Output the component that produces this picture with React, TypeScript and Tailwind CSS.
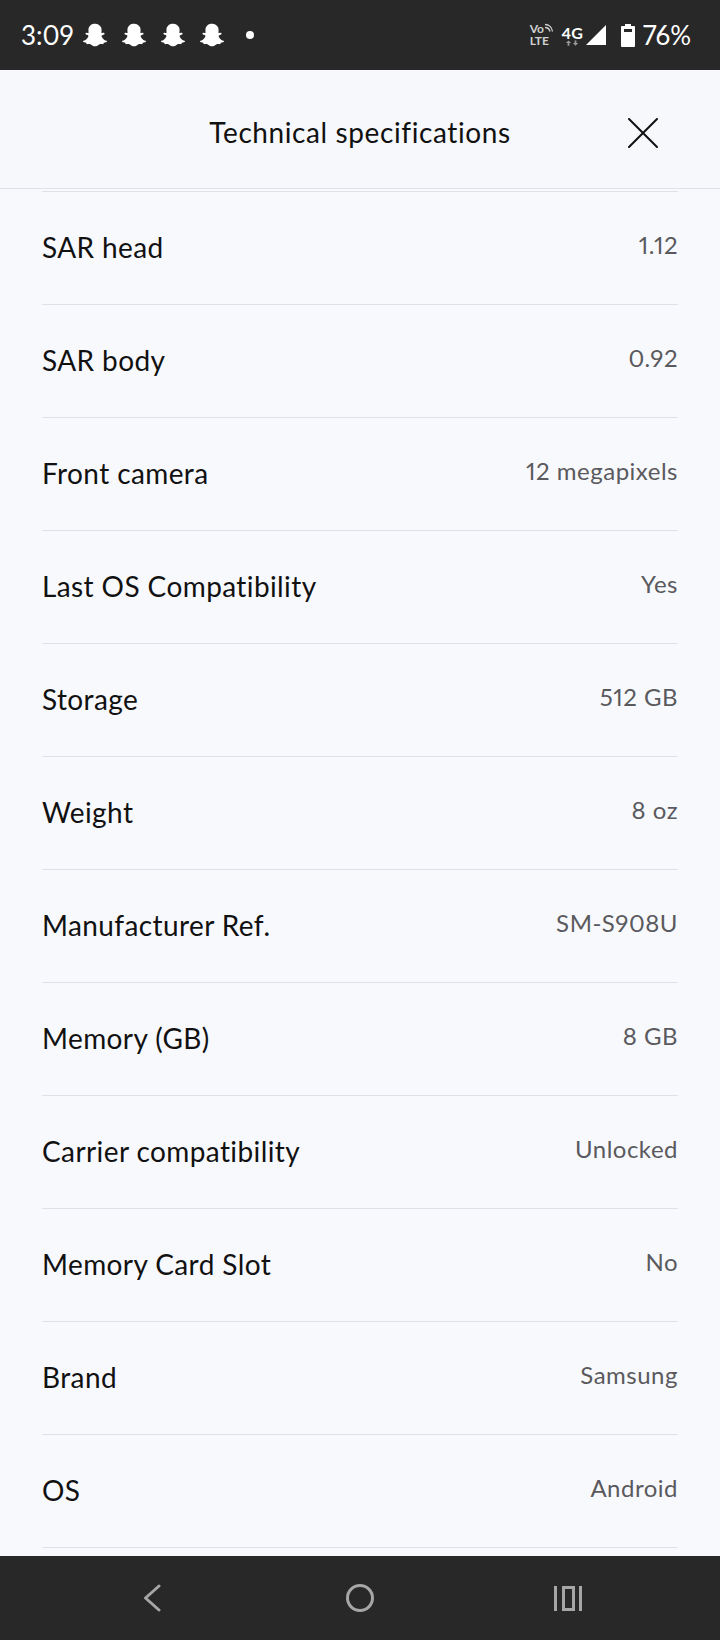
import { FaSnapchatGhost } from "react-icons/fa";

const SPECS = [
  { label: "SAR head", value: "1.12" },
  { label: "SAR body", value: "0.92" },
  { label: "Front camera", value: "12 megapixels" },
  { label: "Last OS Compatibility", value: "Yes" },
  { label: "Storage", value: "512 GB" },
  { label: "Weight", value: "8 oz" },
  { label: "Manufacturer Ref.", value: "SM-S908U" },
  { label: "Memory (GB)", value: "8 GB" },
  { label: "Carrier compatibility", value: "Unlocked" },
  { label: "Memory Card Slot", value: "No" },
  { label: "Brand", value: "Samsung" },
  { label: "OS", value: "Android" },
];

function StatusBar() {
  return (
    <div className="h-[70px] shrink-0 bg-[#282828] text-white flex items-center justify-between pl-[21px] pr-[29px]">
      <div className="flex items-center">
        <span className="text-[26px] mr-[9px]">3:09</span>
        <div className="flex items-center gap-[15px]">
          <FaSnapchatGhost className="w-6 h-6" />
          <FaSnapchatGhost className="w-6 h-6" />
          <FaSnapchatGhost className="w-6 h-6" />
          <FaSnapchatGhost className="w-6 h-6" />
        </div>
        <span className="w-2 h-2 rounded-full bg-white ml-[22px]" />
      </div>
      <div className="flex items-center">
        <div className="relative w-[24px] h-[24px] mr-[8px] text-[#d0d0d0] font-bold text-[12px] leading-[12px]">
          <div>Vo</div>
          <div>LTE</div>
          <svg viewBox="0 0 10 10" className="absolute left-[14px] top-0 w-[10px] h-[10px]" fill="none" stroke="#d0d0d0" strokeWidth="1.3">
            <path d="M1 1.5c4 0 7 3 7.5 7" />
            <path d="M1 4.5c2.5 0 4.5 2 5 4" />
          </svg>
        </div>
        <div className="flex flex-col items-center w-[21px] mr-[3px]">
          <span className="text-[16px] leading-[15px] font-bold">4G</span>
          <svg viewBox="0 0 16 6" className="w-[14px] h-[6px]" fill="#9a9a9a">
            <path d="M4 0l3 3H5v3H3V3H1zM12 6L9 3h2V0h2v3h2z" />
          </svg>
        </div>
        <svg viewBox="0 0 20 20" className="w-5 h-5 mr-[15px]" fill="white">
          <path d="M20 0v20H0z" />
        </svg>
        <svg viewBox="0 0 14 23" className="w-[14px] h-[23px] mr-[8px]" fill="white">
          <path fillRule="evenodd" d="M4 0h6v2h3a1 1 0 0 1 1 1v19a1 1 0 0 1-1 1H1a1 1 0 0 1-1-1V3a1 1 0 0 1 1-1h3zM3 5v3h8V5z" />
        </svg>
        <span className="text-[26px]">76%</span>
      </div>
    </div>
  );
}

function NavBar() {
  return (
    <div className="h-[84px] shrink-0 bg-[#282828] grid grid-cols-3 items-center justify-items-center px-[48px]">
      <svg viewBox="0 0 18 28" className="w-[18px] h-7" fill="none" stroke="#a6a6a6" strokeWidth="3" strokeLinecap="round" strokeLinejoin="round">
        <path d="M16 2 2.5 14 16 26" />
      </svg>
      <span className="w-[28px] h-[28px] rounded-full border-[3.5px] border-[#a6a6a6]" />
      <svg viewBox="0 0 28 25" className="w-[28px] h-[25px]" fill="none" stroke="#a6a6a6" strokeWidth="3">
        <path d="M1.5 0v25" />
        <path d="M26.5 0v25" />
        <rect x="9.5" y="1.5" width="10" height="22" />
      </svg>
    </div>
  );
}

export default function App() {
  return (
    <div className="h-[1640px] w-[720px] overflow-hidden flex flex-col bg-[#f8f9fd] font-['Lato',sans-serif] proportional-nums">
      <StatusBar />
      {/* Header */}
      <header className="h-[119px] shrink-0 relative flex items-center justify-center border-b border-[#dfe1e8] bg-[#f6f8fb]">
        <h1 className="text-[28px] text-[#111] tracking-[0.6px] mt-[6px]">Technical specifications</h1>
        <svg viewBox="0 0 30 30" className="absolute left-[628px] top-[48px] w-[30px] h-[30px]" fill="none" stroke="#111" strokeWidth="2" strokeLinecap="round">
          <path d="M1 1l28 28M29 1 1 29" />
        </svg>
      </header>
      {/* Spec list */}
      <main className="flex-1 overflow-hidden px-[42px] pt-[2px]">
        <div className="border-t border-[#dfe1e8]">
          {SPECS.map((spec) => (
            <div key={spec.label} className="h-[113px] border-b border-[#dfe1e8] flex items-center justify-between">
              <span className="text-[28px] text-[#111] tracking-[0.4px] -mt-[2px]">{spec.label}</span>
              <span className="text-[24px] text-[#5a5a5e] tracking-[0.5px] -mt-[6px]">{spec.value}</span>
            </div>
          ))}
        </div>
      </main>
      <NavBar />
    </div>
  );
}
